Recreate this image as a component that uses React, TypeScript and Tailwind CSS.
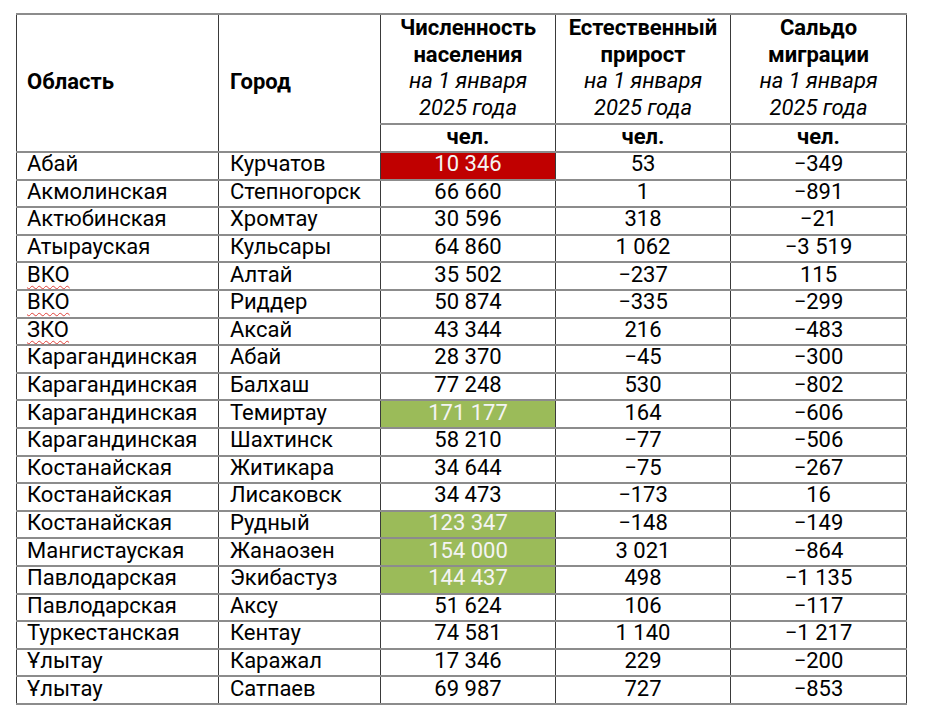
import * as React from "react";

type Row = {
  region: string;
  city: string;
  pop: string;
  growth: string;
  migration: string;
  mark?: "red" | "green";
  squiggle?: boolean;
};

const rows: Row[] = [
  { region: "Абай", city: "Курчатов", pop: "10 346", growth: "53", migration: "−349", mark: "red" },
  { region: "Акмолинская", city: "Степногорск", pop: "66 660", growth: "1", migration: "−891" },
  { region: "Актюбинская", city: "Хромтау", pop: "30 596", growth: "318", migration: "−21" },
  { region: "Атырауская", city: "Кульсары", pop: "64 860", growth: "1 062", migration: "−3 519" },
  { region: "ВКО", city: "Алтай", pop: "35 502", growth: "−237", migration: "115", squiggle: true },
  { region: "ВКО", city: "Риддер", pop: "50 874", growth: "−335", migration: "−299", squiggle: true },
  { region: "ЗКО", city: "Аксай", pop: "43 344", growth: "216", migration: "−483", squiggle: true },
  { region: "Карагандинская", city: "Абай", pop: "28 370", growth: "−45", migration: "−300" },
  { region: "Карагандинская", city: "Балхаш", pop: "77 248", growth: "530", migration: "−802" },
  { region: "Карагандинская", city: "Темиртау", pop: "171 177", growth: "164", migration: "−606", mark: "green" },
  { region: "Карагандинская", city: "Шахтинск", pop: "58 210", growth: "−77", migration: "−506" },
  { region: "Костанайская", city: "Житикара", pop: "34 644", growth: "−75", migration: "−267" },
  { region: "Костанайская", city: "Лисаковск", pop: "34 473", growth: "−173", migration: "16" },
  { region: "Костанайская", city: "Рудный", pop: "123 347", growth: "−148", migration: "−149", mark: "green" },
  { region: "Мангистауская", city: "Жанаозен", pop: "154 000", growth: "3 021", migration: "−864", mark: "green" },
  { region: "Павлодарская", city: "Экибастуз", pop: "144 437", growth: "498", migration: "−1 135", mark: "green" },
  { region: "Павлодарская", city: "Аксу", pop: "51 624", growth: "106", migration: "−117" },
  { region: "Туркестанская", city: "Кентау", pop: "74 581", growth: "1 140", migration: "−1 217" },
  { region: "Ұлытау", city: "Каражал", pop: "17 346", growth: "229", migration: "−200" },
  { region: "Ұлытау", city: "Сатпаев", pop: "69 987", growth: "727", migration: "−853" },
];

const cell = "border-x border-x-[#3a3a3a] border-y-2 border-y-[#8c8c8c] p-0 align-middle";
const body = `${cell} leading-[18px] pb-[3px]`;

const HeadCol = ({ title1, title2 }: { title1: string; title2: string }) => (
  <th className={`${cell} text-center font-normal leading-[26.5px] pb-[2px]`}>
    <div className="font-bold">{title1}</div>
    <div className="font-bold">{title2}</div>
    <div className="italic">на 1 января</div>
    <div className="italic">2025 года</div>
  </th>
);

const App: React.FC = () => {
  return (
    <div className="w-[925px] h-[719px] bg-white pt-[13px] pl-[16px]" style={{ fontFamily: "Roboto, 'Liberation Sans', sans-serif" }}>
      <table className="border-collapse table-fixed w-[890px] text-[22px] text-black">
        <colgroup>
          <col className="w-[202px]" />
          <col className="w-[162px]" />
          <col className="w-[175px]" />
          <col className="w-[175px]" />
          <col className="w-[176px]" />
        </colgroup>
        <thead>
          <tr className="h-[108px]">
            <th rowSpan={2} className={`${cell} text-left font-bold pl-[10px] pb-[3px]`}>Область</th>
            <th rowSpan={2} className={`${cell} text-left font-bold pl-[11px] pb-[3px]`}>Город</th>
            <HeadCol title1="Численность" title2="населения" />
            <HeadCol title1="Естественный" title2="прирост" />
            <HeadCol title1="Сальдо" title2="миграции" />
          </tr>
          <tr className="h-[28px]">
            <th className={`${body} text-center font-bold`}>чел.</th>
            <th className={`${body} text-center font-bold`}>чел.</th>
            <th className={`${body} text-center font-bold`}>чел.</th>
          </tr>
        </thead>
        <tbody>
          {rows.map((r, i) => (
            <tr key={i} className="h-[27.6px]">
              <td className={`${body} pl-[10px]`}>
                {r.squiggle ? (
                  <span className="underline decoration-wavy decoration-[#e0413a] decoration-1 underline-offset-[3px]">{r.region}</span>
                ) : (
                  r.region
                )}
              </td>
              <td className={`${body} pl-[11px]`}>{r.city}</td>
              <td
                className={`${body} text-center ${
                  r.mark === "red"
                    ? "bg-[#c00000] text-[#f4f4f4]"
                    : r.mark === "green"
                    ? "bg-[#9bbb59] text-[#f4f4f4]"
                    : ""
                }`}
              >
                {r.pop}
              </td>
              <td className={`${body} text-center`}>{r.growth}</td>
              <td className={`${body} text-center`}>{r.migration}</td>
            </tr>
          ))}
        </tbody>
      </table>
    </div>
  );
};

export default App;
